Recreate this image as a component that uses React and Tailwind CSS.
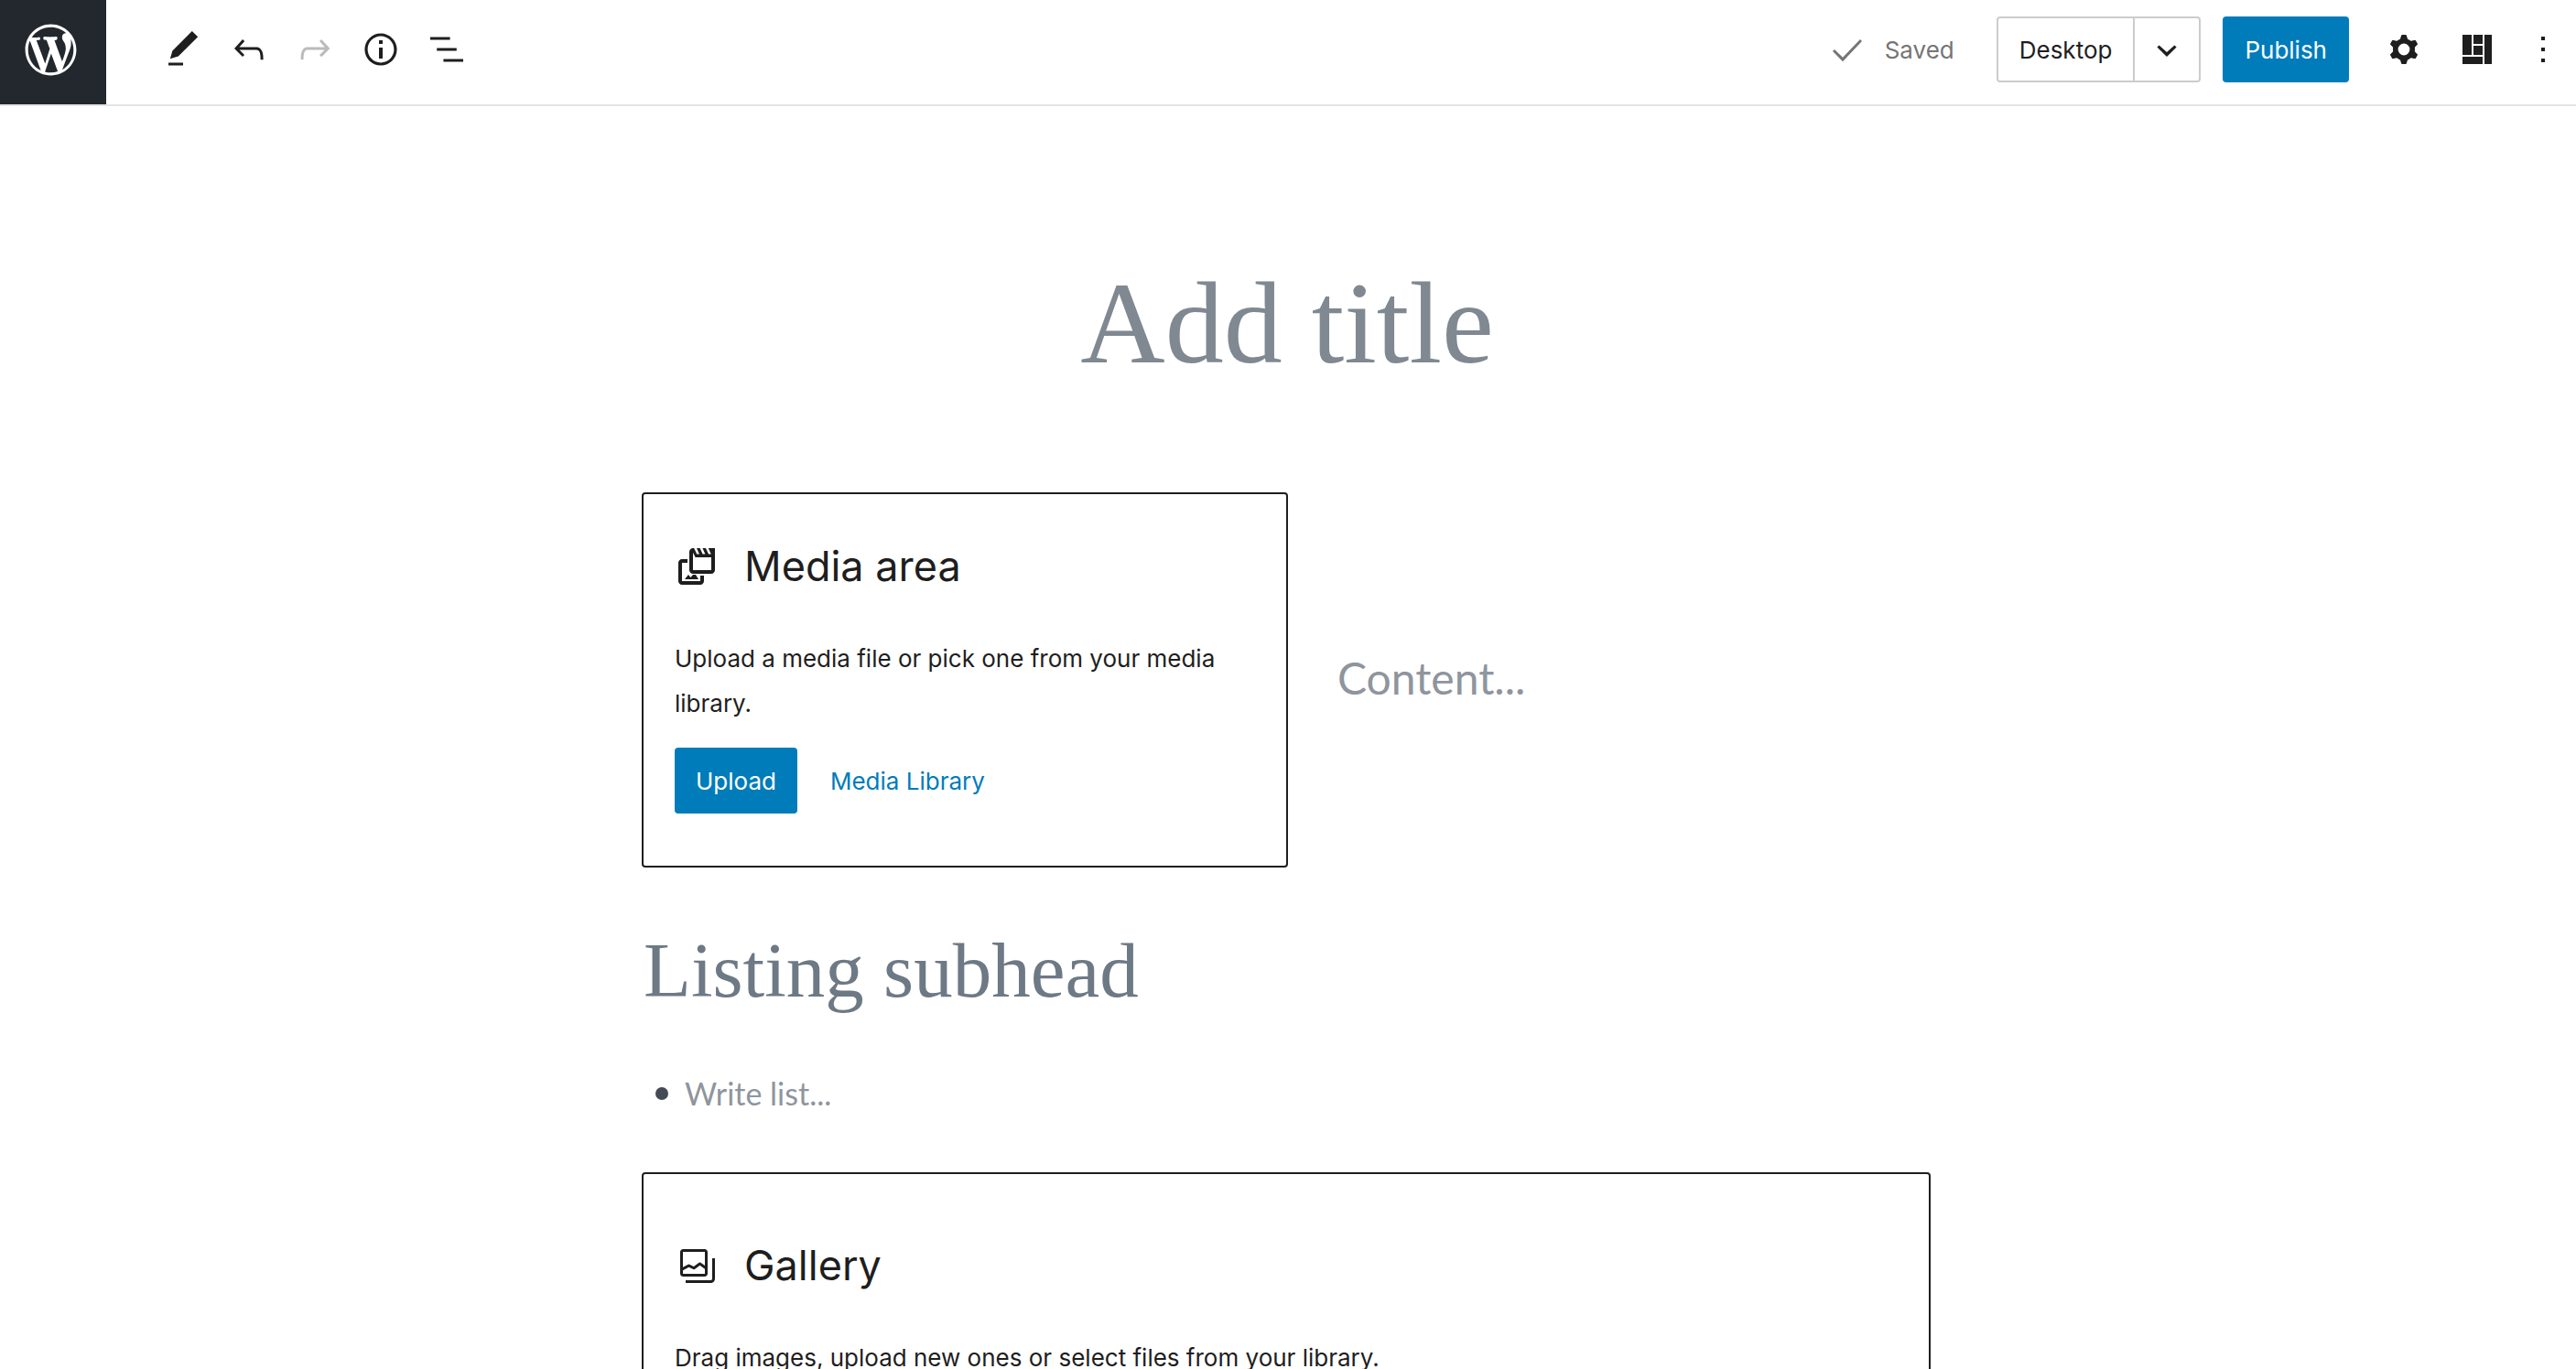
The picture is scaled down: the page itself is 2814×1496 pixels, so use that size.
function Icon({ d, className = '' }) {
  return (
    <svg viewBox="0 0 24 24" fill="currentColor" aria-hidden="true" className={`size-12 shrink-0 ${className}`}>
      <path fillRule="evenodd" d={d} />
    </svg>
  );
}

const paths = {
  edit: 'M20.1 5.1L16.9 2 6.2 12.7l-1.3 4.4 4.5-1.3L20.1 5.1zM4 20.8h8v-1.5H4v1.5z',
  undo: 'M18.3 11.7c-.6-.6-1.4-.9-2.3-.9H6.7l2.9-3.3-1.1-1-4.5 5L8.5 16l1-1-2.7-2.7H16c.5 0 .9.2 1.3.5 1 1 1 3.4 1 4.5v.3h1.5v-.2c0-1.5 0-4.3-1.5-5.7z',
  redo: 'M15.6 6.5l-1.1 1 2.9 3.3H8c-.9 0-1.7.3-2.3.9-1.4 1.5-1.4 4.2-1.4 5.6v.2h1.5v-.3c0-1.1 0-3.5 1-4.5.3-.3.7-.5 1.3-.5h9.2L14.5 15l1.1 1.1 4.6-4.6-4.6-5z',
  info: 'M12 3.2c-4.8 0-8.8 3.9-8.8 8.8 0 4.8 3.9 8.8 8.8 8.8 4.8 0 8.8-3.9 8.8-8.8 0-4.8-4-8.8-8.8-8.8zm0 16c-4 0-7.2-3.3-7.2-7.2C4.8 8 8 4.8 12 4.8s7.2 3.3 7.2 7.2c0 4-3.2 7.2-7.2 7.2zM11 17h2v-6h-2v6zm0-8h2V7h-2v2z',
  outline: 'M13.8 5.2H3v1.5h10.8V5.2zm-3.6 12v1.5H21v-1.5H10.2zm7.2-6H6.6v1.5h10.8v-1.5z',
  check: 'M9 18.6L3.5 13l1-1L9 16.4l9.5-9.9 1 1z',
  chevron: 'M6.7 10.8l1.1-1.1 4.2 3.8 4.2-3.8 1.1 1.1L12 16z',
  layout: 'M4 4h5v11H4zM10 4h5v5h-5zM10 10h5v5h-5zM4 16h11v4H4zM16 4h4v16h-4z',
  more: 'M11 5h2v2h-2zM11 11h2v2h-2zM11 17h2v2h-2z',
  media: 'M22 2h-3.600l1.500 3.200h-1.400L17 2h-1.800l1.500 3.200h-1.400L13.800 2H12l1.500 3.200h-1.400L10.600 2H10C8.900 2 8 2.900 8 4v10c0 1.100.9 2 2 2h10c1.100 0 2-.9 2-2V2zM10 4.400L11.300 7H20v7H10V4.400zM7 8H4c-1.100 0-2 .9-2 2v10c0 1.100.9 2 2 2h10c1.100 0 2-.9 2-2v-3h-2v3H4V10h3V8zM5.500 19L7.500 16.500 8.700 18 10 16.500H11.500L13 19z',
  gallery: 'M16.375 4.5H4.625a.125.125 0 0 0-.125.125v8.254l2.859-1.54a.75.75 0 0 1 .68-.016l2.384 1.142 2.89-2.074a.75.75 0 0 1 .874 0l2.313 1.66V4.625a.125.125 0 0 0-.125-.125Zm.125 9.398-2.75-1.975-2.813 2.02a.75.75 0 0 1-.76.067l-2.444-1.17L4.5 14.583v1.792c0 .069.056.125.125.125h11.75a.125.125 0 0 0 .125-.125v-2.477ZM4.625 3C3.728 3 3 3.728 3 4.625v11.75C3 17.273 3.728 18 4.625 18h11.75c.898 0 1.625-.727 1.625-1.625V4.625C18 3.728 17.273 3 16.375 3H4.625ZM20.500 8v11c0 .69-.31 1-.999 1H6v1.5h13.501c1.52 0 2.499-.982 2.499-2.5V8H20.500Z',
};

function CogIcon() {
  return (
    <svg viewBox="0 0 24 24" fill="currentColor" aria-hidden="true" className="size-12 shrink-0">
      <circle cx="12" cy="12" r="4.600" fill="none" stroke="currentColor" strokeWidth="2.800" />
      {[0, 60, 120, 180, 240, 300].map((angle) => (
        <path key={angle} d="M9.700 7.300L10.600 4.200Q10.700 4 11 4h2q.3 0 .4.2l.9 3.100z" transform={`rotate(${angle} 12 12)`} />
      ))}
    </svg>
  );
}

function ToolButton({ label, icon, children, className = '', disabled }) {
  return (
    <button type="button" aria-label={label} disabled={disabled} className={`grid size-18 place-items-center ${className}`}>
      {children ?? <Icon d={icon} />}
    </button>
  );
}

function WordPressLogo() {
  return (
    <svg viewBox="-2 -2 24 24" fill="currentColor" aria-hidden="true" className="size-[67px]">
      <path d="M20 10c0-5.510-4.490-10-10-10C4.480 0 0 4.490 0 10c0 5.520 4.480 10 10 10 5.510 0 10-4.480 10-10zM7.780 15.370L4.370 6.220c.55-.020 1.170-.080 1.170-.080.500-.060.440-1.130-.060-1.110 0 0-1.450.110-2.370.110-.180 0-.370 0-.580-.010C4.120 2.690 6.870 1.110 10 1.110c2.330 0 4.450.870 6.050 2.340-.680-.110-1.650.390-1.650 1.580 0 .740.450 1.360.900 2.100.350.610.550 1.360.550 2.460 0 1.490-1.400 5-1.400 5l-3.030-8.370c.540-.020.820-.170.820-.170.500-.050.440-1.250-.060-1.220 0 0-1.440.120-2.380.120-.870 0-2.330-.120-2.330-.120-.500-.030-.560 1.200-.060 1.220l.920.080 1.260 3.410zM17.410 10c.240-.640.740-1.870.430-4.250.700 1.290 1.050 2.710 1.050 4.250 0 3.290-1.730 6.240-4.400 7.780.97-2.590 1.940-5.200 2.920-7.780zM6.100 18.090C3.120 16.650 1.110 13.530 1.110 10c0-1.300.230-2.480.720-3.590C3.250 10.300 4.670 14.200 6.100 18.090zm4.030-6.630l2.580 6.980c-.860.290-1.760.450-2.710.450-.790 0-1.570-.110-2.290-.330.810-2.380 1.620-4.740 2.420-7.100z" />
    </svg>
  );
}

function PlaceholderTitle({ icon, children }) {
  return (
    <h2 className="flex h-[60px] items-center gap-7 text-[45px]">
      <Icon d={icon} />
      {children}
    </h2>
  );
}

export default function App() {
  return (
    <div className="h-screen overflow-hidden bg-white font-[Inter,sans-serif] text-[26px] text-[#1e1e1e]">
      <header className="flex h-[116px] items-center border-b-2 border-[#e2e4e7]">
        <a href="#dashboard" aria-label="Dashboard" className="flex w-[116px] items-center self-stretch bg-[#23282e] pl-[22px] pb-[6px] text-white">
          <WordPressLogo />
        </a>
        <div className="flex pb-[6px] pl-12">
          <ToolButton label="Tools" icon={paths.edit} />
          <ToolButton label="Undo" icon={paths.undo} />
          <ToolButton label="Redo" icon={paths.redo} disabled className="text-[#bbb]" />
          <ToolButton label="Details" icon={paths.info} />
          <ToolButton label="Outline" icon={paths.outline} />
        </div>
        <div className="ml-auto flex items-center pb-[6px]">
          <span className="mr-[46px] flex items-center gap-4 text-[#757575]">
            <Icon d={paths.check} />
            Saved
          </span>
          <div className="mr-6 flex h-18 rounded border-2 border-[#ccc]">
            <button type="button" className="px-[23px]">Desktop</button>
            <button type="button" aria-label="Preview options" className="grid w-18 place-items-center border-l-2 border-[#ccc]">
              <Icon d={paths.chevron} />
            </button>
          </div>
          <button type="button" className="mr-6 h-18 rounded bg-[#007cba] px-6 text-white">Publish</button>
          <ToolButton label="Settings">
            <CogIcon />
          </ToolButton>
          <ToolButton label="Layout" icon={paths.layout} className="ml-2" />
          <ToolButton label="More" icon={paths.more} />
        </div>
      </header>

      <div className="pr-1">
        <main className="mx-auto max-w-[1408px] pt-[147px]">
          <h1 className="pl-[2px] text-center font-['Liberation_Serif',serif] text-[128px] leading-[180px] text-[#808891]">Add title</h1>
          <div className="mt-[95px] grid grid-cols-[706fr_702fr] items-center">
            <section className="rounded border-2 border-[#1e1e1e] px-[34px] pt-[49px] pb-[57px]">
              <PlaceholderTitle icon={paths.media}>Media area</PlaceholderTitle>
              <p className="mt-[46px] leading-[49px]">Upload a media file or pick one from your media library.</p>
              <div className="mt-6 flex items-center gap-9">
                <button type="button" className="h-18 rounded bg-[#007cba] px-[23px] text-white">Upload</button>
                <button type="button" className="text-[#007cba]">Media Library</button>
              </div>
            </section>
            <p className="pb-1 pl-[54px] font-[Lato,sans-serif] text-[48px] text-[#8f959d]">Content...</p>
          </div>
          <h2 className="mt-[58px] pl-[2px] font-['Liberation_Serif',serif] text-[85px] leading-[108px] text-[#6d7985]">Listing subhead</h2>
          <ul className="mt-[51px] font-[Lato,sans-serif] text-[34px] leading-[60px] text-[#8f959d]">
            <li className="flex items-center gap-[18px] pl-[15px]">
              <span className="size-[14px] rounded-full bg-[#444b57]" />
              Write list...
            </li>
          </ul>
          <section className="mt-[56px] rounded border-2 border-[#1e1e1e] px-[34px] pt-[70px] pb-[57px]">
            <PlaceholderTitle icon={paths.gallery}>Gallery</PlaceholderTitle>
            <p className="mt-[46px] leading-[49px]">Drag images, upload new ones or select files from your library.</p>
          </section>
        </main>
      </div>
    </div>
  );
}
